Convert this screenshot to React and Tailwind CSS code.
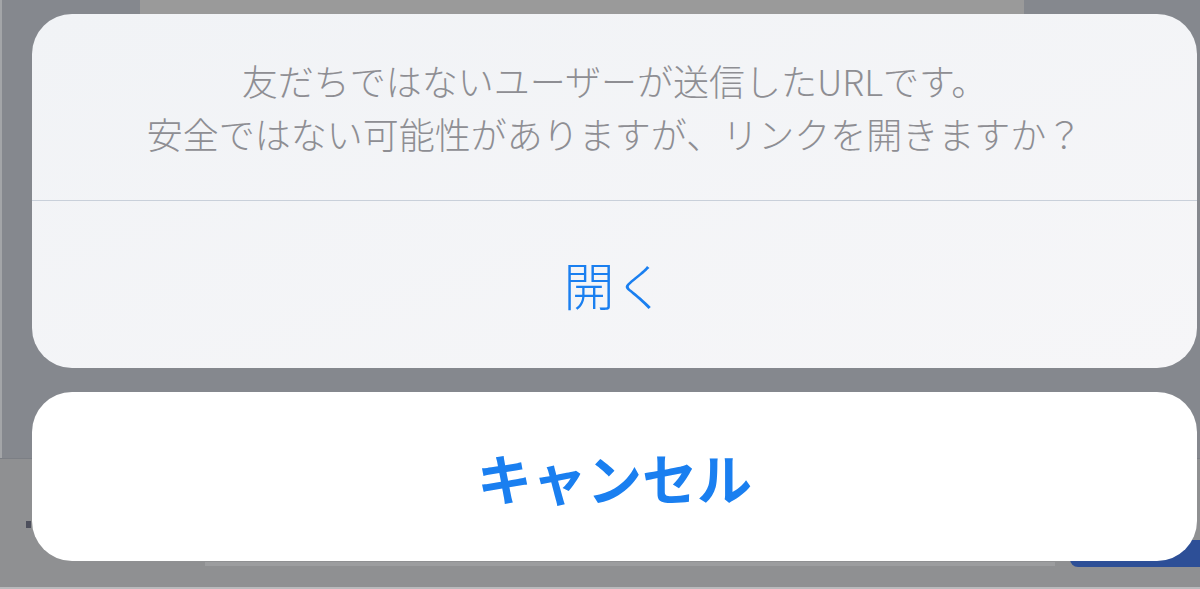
import React from 'react';

const fontStack = { fontFamily: '"Noto Sans CJK JP", "Noto Sans", sans-serif' };

export default function App() {
  return (
    <div className="relative h-[589px] w-full overflow-hidden bg-[#85888e]" style={fontStack}>
      {/* Page under the sheet (dimmed) */}
      <div className="absolute left-[140px] top-0 h-[14px] w-[884px] bg-[#9a9a9a]" />
      <div className="absolute left-0 top-0 h-full w-[2px] bg-[#a3a5a8]" />
      <div className="absolute bottom-0 left-0 top-[458px] w-full border-t border-[#7c7f85] bg-[#8f9092]" />
      <div className="absolute left-[26px] top-[521px] h-[7px] w-[5px] bg-[#4d4f5c]" />
      <div className="absolute left-[205px] top-[562px] h-[4px] w-[850px] bg-[#9c9d9f]" />
      <div className="absolute left-[1070px] top-[540px] h-[27px] w-[140px] rounded-bl-[8px] bg-[#2d4f97]" />
      <div className="absolute bottom-0 left-0 h-[2px] w-full bg-[#b9babc]" />

      {/* Action sheet */}
      <div className="relative flex flex-col gap-[24px] pl-[32px] pr-[3px] pt-[14px]">
        <div className="flex h-[354px] flex-col overflow-hidden rounded-[40px] bg-gradient-to-br from-[#f1f3f6] to-[#f6f6f8]">
          <div className="flex h-[186px] flex-col items-center justify-center text-[36px] font-light leading-[53px] text-[#8e8e93]">
            <p>友だちではないユーザーが送信したURLです。</p>
            <p>安全ではない可能性がありますが、リンクを開きますか？</p>
          </div>
          <div className="h-px bg-[#c9d0da]" />
          <button className="flex flex-1 items-center justify-center text-[51px] font-light text-[#1a7ff0]">
            開く
          </button>
        </div>
        <button className="flex h-[169px] items-center justify-center rounded-[40px] bg-white text-[55px] font-bold text-[#1a7ff0]">
          キャンセル
        </button>
      </div>
    </div>
  );
}
